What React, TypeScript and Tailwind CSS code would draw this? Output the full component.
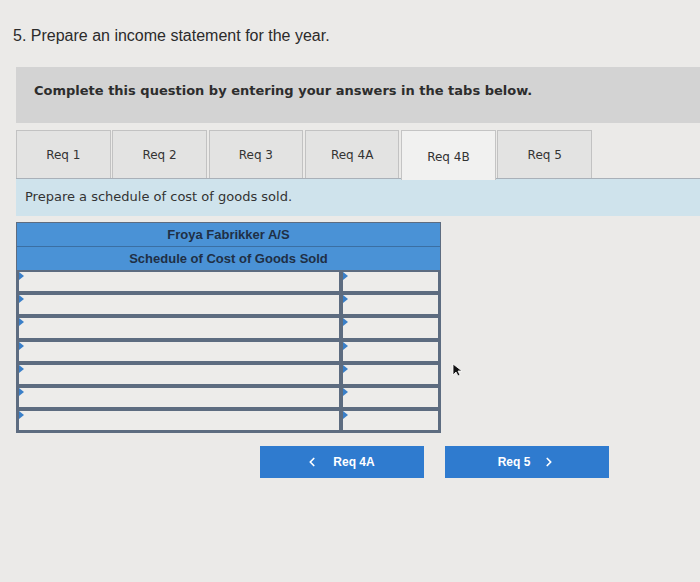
import { ChevronLeft, ChevronRight } from "lucide-react";

const tabs = ["Req 1", "Req 2", "Req 3", "Req 4A", "Req 4B", "Req 5"];
const rows = [0, 1, 2, 3, 4, 5, 6];

function Cell({ wide }: { wide?: boolean }) {
  return (
    <div
      className={`relative h-full bg-[#edecea] border-2 border-[#5d6c80] ${
        wide ? "w-[324px]" : "flex-1"
      }`}
    >
      {/* dropdown marker */}
      <span className="absolute left-0 top-0 w-0 h-0 border-t-[4px] border-b-[4px] border-l-[5px] border-t-transparent border-b-transparent border-l-[#3a7fc8]" />
    </div>
  );
}

export default function App() {
  return (
    <div className="relative w-[700px] h-[582px] bg-[#ebeae8] overflow-hidden font-['DejaVu_Sans',sans-serif] text-[#333]">
      <h1 className="pl-[13px] pt-[24px] h-[67px] text-[16px] font-['Liberation_Sans',Arial,sans-serif] text-[#2b2b2b]">
        5. Prepare an income statement for the year.
      </h1>

      <div className="ml-[16px] h-[56px] bg-[#d3d3d3] pl-[18px] pt-[14px]">
        <p className="text-[13px] font-bold text-[#2d2d2d]">
          Complete this question by entering your answers in the tabs below.
        </p>
      </div>

      {/* Tabs */}
      <div className="ml-[16px] mt-[7px] flex gap-[1.8px] h-[49px] border-b border-[#a9b0b8]">
        {tabs.map((t) => (
          <div
            key={t}
            className={`w-[94.5px] flex items-center justify-center text-[12px] border border-b-0 ${
              t === "Req 4B"
                ? "bg-[#f1f1f0] border-[#c4c4c4] h-[50px] pt-[3px]"
                : "bg-[#e3e3e2] border-[#c2c2c2] pt-[1px]"
            }`}
          >
            {t}
          </div>
        ))}
      </div>

      <div className="ml-[16px] h-[37px] bg-[#cfe3ec] flex items-center pl-[9px] pb-[2px] text-[13px] text-[#333]">
        Prepare a schedule of cost of goods sold.
      </div>

      {/* Table */}
      <div className="ml-[16px] mt-[6px] w-[425px] border border-[#5d6c80]">
        <div className="bg-[#4a92d6] font-['Liberation_Sans',Arial,sans-serif] font-bold text-[13px] text-[#1f2f45]">
          <div className="h-[24px] flex items-center justify-center pt-[1px] border-b border-[#3b6fa3]">
            Froya Fabrikker A/S
          </div>
          <div className="h-[23px] flex items-center justify-center pt-[1px]">
            Schedule of Cost of Goods Sold
          </div>
        </div>
        {rows.map((r) => (
          <div key={r} className="flex h-[23.2px]">
            <Cell wide />
            <Cell />
          </div>
        ))}
      </div>

      {/* Navigation */}
      <div className="flex gap-[21px] ml-[260px] mt-[13px]">
        <button className="w-[164px] h-[32px] bg-[#2f7bcf] text-white text-[12px] font-bold flex items-center justify-center gap-[14px] font-['Liberation_Sans',Arial,sans-serif]">
          <ChevronLeft className="w-[14px] h-[14px]" strokeWidth={3} />
          <span className="mr-[4px]">Req 4A</span>
        </button>
        <button className="w-[164px] h-[32px] bg-[#2f7bcf] text-white text-[12px] font-bold flex items-center justify-center gap-[12px] font-['Liberation_Sans',Arial,sans-serif]">
          <span>Req 5</span>
          <ChevronRight className="w-[14px] h-[14px]" strokeWidth={3} />
        </button>
      </div>

      {/* mouse pointer */}
      <svg className="absolute left-[452px] top-[363px]" width="10" height="14" viewBox="0 0 10 14">
        <path d="M1 1 L1 12 L4 9 L6 13 L8 12 L6 8 L10 8 Z" fill="#111" stroke="#fff" strokeWidth="0.8" />
      </svg>
    </div>
  );
}
